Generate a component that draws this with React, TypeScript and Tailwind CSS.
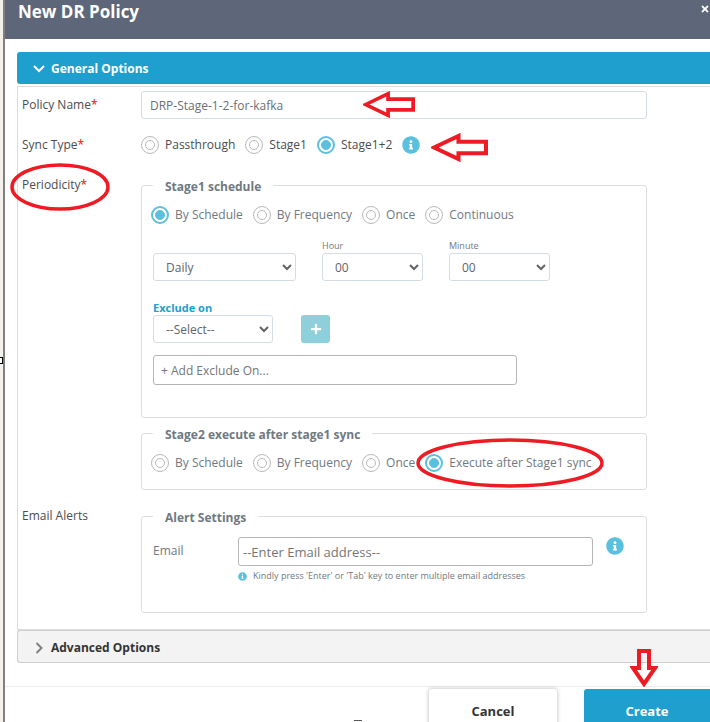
import React, { useState } from 'react';
import { FaInfoCircle, FaPlus, FaTimes } from 'react-icons/fa';

interface RadioProps {
    name: string;
    label: string;
    value: string;
    onSelect: (value: string) => void;
}

const Radio: React.FC<RadioProps> = ({ name, label, value, onSelect }) => (
    <label className="flex items-center gap-1.5 whitespace-nowrap">
        <input
            type="radio"
            name={name}
            checked={value === label}
            onChange={() => onSelect(label)}
            className="grid h-[18px] w-[18px] shrink-0 appearance-none place-content-center rounded-full border border-[#b9b9b9] before:h-[10px] before:w-[10px] before:rounded-full before:border before:border-[#b9b9b9] before:content-[''] checked:border-2 checked:border-[#5bc0de] checked:before:border-[#5bc0de] checked:before:bg-[#5bc0de]"
        />
        <span className="leading-4">{label}</span>
    </label>
);

interface SelectProps {
    id: string;
    className: string;
    options: string[];
    label?: string;
}

const Select: React.FC<SelectProps> = ({ id, className, options, label }) => (
    <select
        id={id}
        aria-label={label}
        className={`h-7 rounded-[3px] border border-[#d5dde3] bg-white pl-2 text-[#5f6469] ${className}`}
    >
        {options.map((option) => (
            <option key={option}>{option}</option>
        ))}
    </select>
);

const Legend = ({ children }: { children: React.ReactNode }) => (
    <legend className="ml-[11px] px-3 pt-1 font-bold leading-4 text-[#707981]">{children}</legend>
);

const ArrowLeft = ({ className }: { className: string }) => (
    <svg className={`pointer-events-none absolute ${className}`} viewBox="0 0 56 30" preserveAspectRatio="none" fill="none">
        <path d="M3 15L27 3V9H54V21H27V27Z" stroke="#ed1c24" strokeWidth="4" />
    </svg>
);

const Required = () => <span className="text-[#ff0000]">*</span>;

const hours = Array.from({ length: 24 }, (_, i) => String(i).padStart(2, '0'));
const minutes = Array.from({ length: 60 }, (_, i) => String(i).padStart(2, '0'));

const App: React.FC = () => {
    const [policyName, setPolicyName] = useState('DRP-Stage-1-2-for-kafka');
    const [syncType, setSyncType] = useState('Stage1+2');
    const [stage1, setStage1] = useState('By Schedule');
    const [stage2, setStage2] = useState('Execute after Stage1 sync');

    return (
        <div className="flex h-screen overflow-hidden bg-white font-['Open_Sans',sans-serif] text-[12px] text-[#707981]">
            <div className="relative w-[5px] shrink-0 border-r-2 border-[#808080] bg-[#f4f0ec]">
                <span className="absolute -left-1 top-[357px] h-[7px] w-[7px] border border-black bg-white" />
            </div>

            <div className="relative min-w-0 flex-1">
                <header className="flex h-[39px] items-start justify-between bg-[#5e6679] pl-[13px] text-white">
                    <h1 className="text-[17px] font-bold leading-6">New DR Policy</h1>
                    <button type="button" aria-label="Close" className="pt-1">
                        <FaTimes className="h-[10px] w-[10px]" />
                    </button>
                </header>

                <main className="pb-[23px] pl-3 pt-[13px]">
                    <button type="button" className="flex h-8 w-full items-center gap-1.5 rounded-l-[3px] bg-[#1e9fce] pl-4 pt-0.5 font-bold text-white">
                        <svg className="h-3 w-3" viewBox="0 0 12 12" fill="none">
                            <path d="M1 3L6 8L11 3" stroke="currentColor" strokeWidth="2" />
                        </svg>
                        General Options
                    </button>

                    <div className="mt-0.5 flex flex-col border border-r-0 border-[#dcdcdc] pb-4 pl-1 pr-[63px] pt-1">
                        <div className="relative flex">
                            <label htmlFor="policy" className="w-[119px] shrink-0 leading-7 text-[#4c4c4c]">Policy Name<Required /></label>
                            <input
                                id="policy"
                                type="text"
                                value={policyName}
                                onChange={(e) => setPolicyName(e.target.value)}
                                className="h-7 min-w-0 flex-1 rounded-[3px] border border-[#d5dde3] px-2 text-[#6b7075]"
                            />
                            <ArrowLeft className="left-[341px] top-0 h-[27px] w-[52px]" />
                        </div>

                        <div className="relative mt-4 flex text-[#4c4c4c]">
                            <span className="w-[119px] shrink-0 leading-5">Sync Type<Required /></span>
                            <div className="flex items-center gap-2.5">
                                <Radio name="sync" label="Passthrough" value={syncType} onSelect={setSyncType} />
                                <Radio name="sync" label="Stage1" value={syncType} onSelect={setSyncType} />
                                <Radio name="sync" label="Stage1+2" value={syncType} onSelect={setSyncType} />
                                <FaInfoCircle className="h-[18px] w-[18px] text-[#5bc0de]" />
                            </div>
                            <ArrowLeft className="left-[409px] -top-0.5 h-[29px] w-[57px]" />
                        </div>

                        <div className="relative mt-5 flex">
                            <span className="w-[119px] shrink-0 leading-5 text-[#4c4c4c]">Periodicity<Required /></span>
                            <svg className="pointer-events-none absolute -left-3 -top-3 h-12 w-[100px]" viewBox="0 0 100 48" fill="none">
                                <ellipse cx="50" cy="24" rx="48" ry="22" stroke="#ed1c24" strokeWidth="3.5" />
                            </svg>

                            <div className="flex min-w-0 flex-1 flex-col gap-[5px]">
                                <fieldset className="min-w-0 rounded-[3px] border border-[#dcdfe1] pb-8">
                                    <Legend>Stage1 schedule</Legend>
                                    <div className="flex gap-2.5 pl-[9px] pt-[11px]">
                                        <Radio name="stage1" label="By Schedule" value={stage1} onSelect={setStage1} />
                                        <Radio name="stage1" label="By Frequency" value={stage1} onSelect={setStage1} />
                                        <Radio name="stage1" label="Once" value={stage1} onSelect={setStage1} />
                                        <Radio name="stage1" label="Continuous" value={stage1} onSelect={setStage1} />
                                    </div>

                                    <div className="mt-[15px] flex items-end gap-[26px] pl-[11px]">
                                        <Select id="repeat" label="Repeat" className="w-[143px]" options={['Daily', 'Weekly', 'Monthly']} />
                                        <div className="flex flex-col">
                                            <label htmlFor="hour" className="text-[9px] leading-[14px]">Hour</label>
                                            <Select id="hour" className="w-[101px]" options={hours} />
                                        </div>
                                        <div className="flex flex-col">
                                            <label htmlFor="minute" className="text-[9px] leading-[14px]">Minute</label>
                                            <Select id="minute" className="w-[101px]" options={minutes} />
                                        </div>
                                    </div>

                                    <div className="mt-5 flex items-end gap-7 pl-[11px]">
                                        <div className="flex flex-col">
                                            <label htmlFor="exclude" className="text-[11px] font-bold leading-[14px] text-[#1e9fce]">Exclude on</label>
                                            <Select id="exclude" className="w-[120px]" options={['--Select--', 'Day', 'Date']} />
                                        </div>
                                        <button type="button" aria-label="Add" className="flex h-7 w-[29px] items-center justify-center rounded-[3px] bg-[#8dd0dc] text-white">
                                            <FaPlus className="h-3 w-3" />
                                        </button>
                                    </div>
                                    <input
                                        type="text"
                                        aria-label="Add exclude on"
                                        placeholder="+ Add Exclude On..."
                                        className="ml-[11px] mt-3 block h-[30px] w-[364px] rounded-[3px] border border-[#b5b5b5] px-[7px] placeholder-[#757575]"
                                    />
                                </fieldset>

                                <fieldset className="relative min-w-0 rounded-[3px] border border-[#dcdfe1] pb-[17px]">
                                    <Legend>Stage2 execute after stage1 sync</Legend>
                                    <div className="flex gap-2.5 pl-[9px] pt-[11px]">
                                        <Radio name="stage2" label="By Schedule" value={stage2} onSelect={setStage2} />
                                        <Radio name="stage2" label="By Frequency" value={stage2} onSelect={setStage2} />
                                        <Radio name="stage2" label="Once" value={stage2} onSelect={setStage2} />
                                        <Radio name="stage2" label="Execute after Stage1 sync" value={stage2} onSelect={setStage2} />
                                    </div>
                                    <svg className="pointer-events-none absolute -top-[5px] left-[274px] h-[50px] w-[188px]" viewBox="0 0 188 50" fill="none">
                                        <ellipse cx="94" cy="25" rx="92" ry="23" stroke="#ed1c24" strokeWidth="3.5" />
                                    </svg>
                                </fieldset>
                            </div>
                        </div>

                        <div className="mt-4 flex">
                            <span className="w-[119px] shrink-0 leading-5 text-[#4c4c4c]">Email Alerts</span>
                            <fieldset className="min-w-0 flex-1 rounded-[3px] border border-[#dcdfe1] pb-7">
                                <Legend>Alert Settings</Legend>
                                <div className="flex pl-[11px] pt-[11px]">
                                    <label htmlFor="email" className="w-[85px] shrink-0 leading-7">Email</label>
                                    <div className="min-w-0 flex-1">
                                        <input
                                            id="email"
                                            type="text"
                                            placeholder="--Enter Email address--"
                                            className="block h-[29px] w-full rounded-[3px] border border-[#b5b5b5] px-1 text-[13px] placeholder-[#757575]"
                                        />
                                        <p className="flex items-center gap-1.5 pt-0.5 text-[9px] leading-4">
                                            <FaInfoCircle className="h-[9px] w-[9px] text-[#5bc0de]" />
                                            Kindly press 'Enter' or 'Tab' key to enter multiple email addresses
                                        </p>
                                    </div>
                                    <FaInfoCircle className="ml-[13px] mr-[22px] h-[18px] w-[18px] shrink-0 text-[#5bc0de]" />
                                </div>
                            </fieldset>
                        </div>
                    </div>

                    <button type="button" className="flex h-[33px] w-full items-center gap-1.5 rounded-l-[3px] border border-r-0 border-[#cfcfcf] bg-[#f3f3f3] pl-[15px] pt-0.5 font-bold text-[#333333]">
                        <svg className="h-3 w-3" viewBox="0 0 12 12" fill="none">
                            <path d="M3.5 1L8.5 6L3.5 11" stroke="#808080" strokeWidth="2" />
                        </svg>
                        Advanced Options
                    </button>
                </main>

                <footer className="relative flex justify-end gap-[27px] border-t border-[#ededed] pt-0.5 text-[13px] font-bold">
                    <button type="button" className="h-[46px] w-[128px] rounded-[3px] bg-white text-[#333333] shadow-[0_0_4px_rgba(0,0,0,0.3)]">Cancel</button>
                    <button type="button" className="h-[46px] w-[126px] rounded-l-[3px] bg-[#1e9fce] text-white">Create</button>
                    <svg className="pointer-events-none absolute -top-[39px] right-[52px] h-[39px] w-7" viewBox="0 0 28 39" fill="none">
                        <path d="M9 3H19V20H25L14 36L3 20H9Z" stroke="#ed1c24" strokeWidth="4" />
                    </svg>
                </footer>
                <span className="absolute bottom-0 left-[349px] h-0.5 w-2 border-t border-[#555555]" />
            </div>
        </div>
    );
};

export default App;
